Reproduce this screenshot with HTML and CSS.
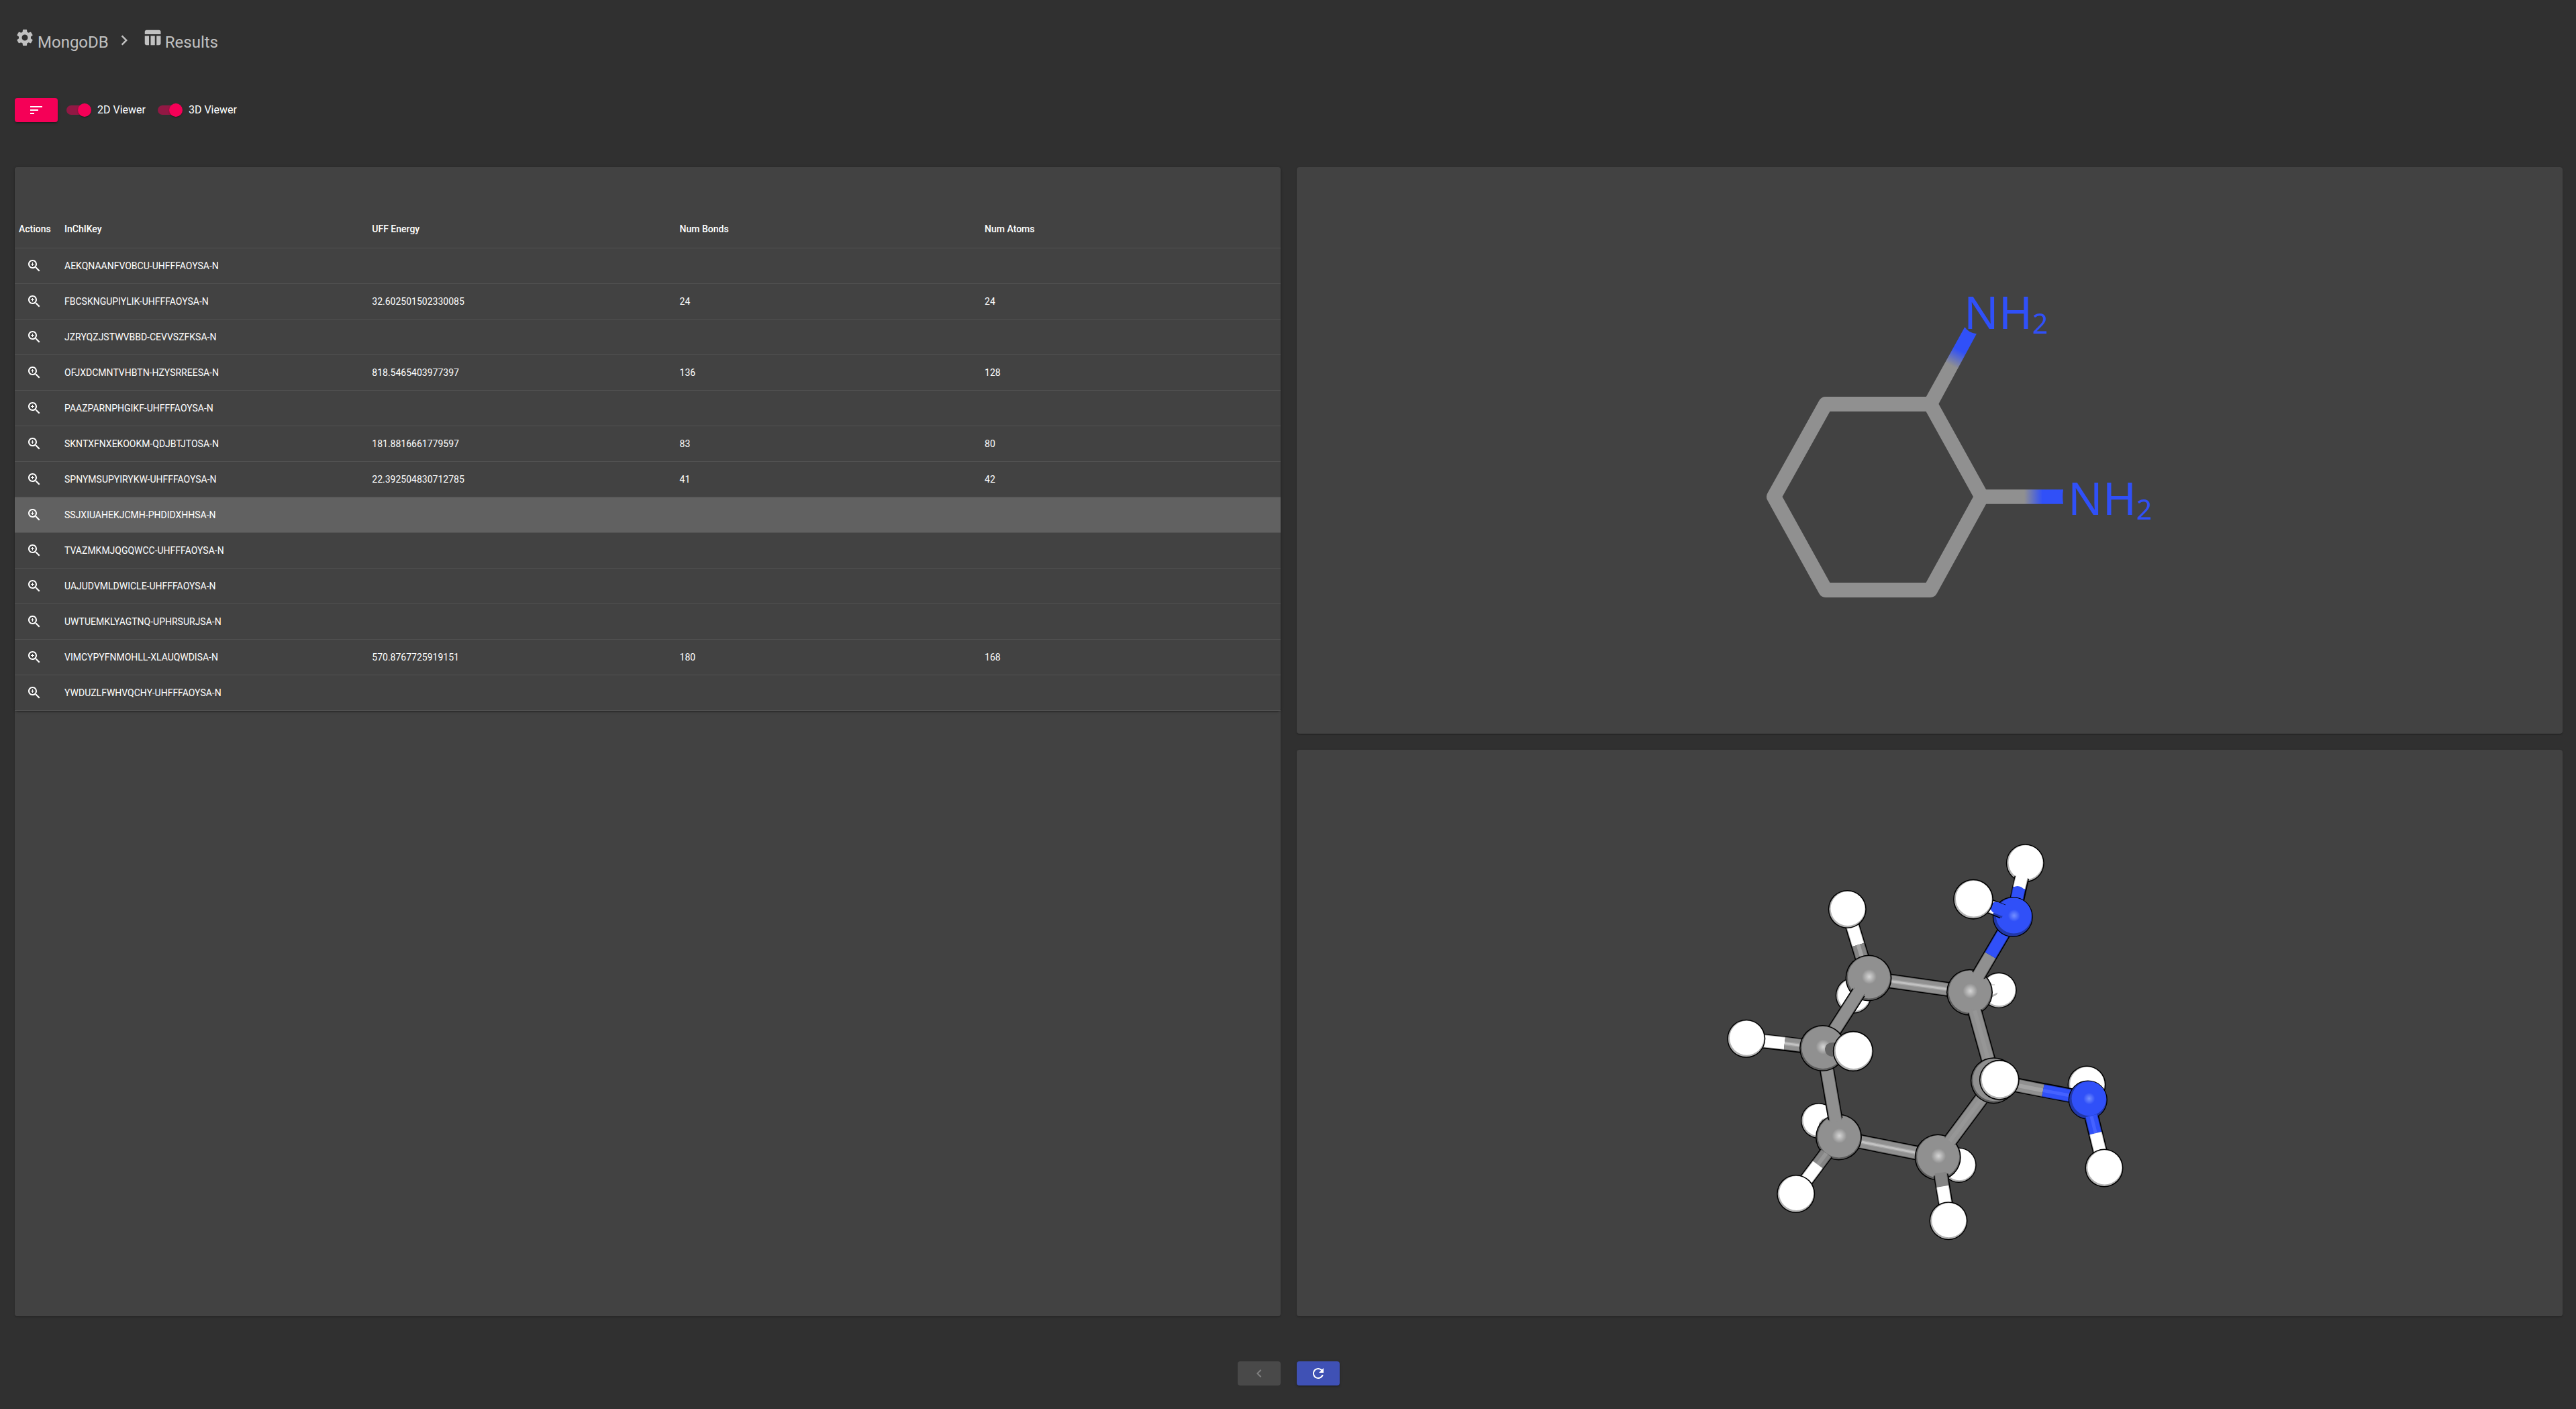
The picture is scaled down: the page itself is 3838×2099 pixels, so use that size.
FILE: index.html
```html
<!DOCTYPE html>
<html lang="en">
<head>
<meta charset="utf-8">
<title>MongoDB Results</title>
<link rel="stylesheet" href="styles.css">
</head>
<body>
<svg class="sprite" aria-hidden="true">
  <symbol id="i-zoom" viewBox="0 0 24 24"><path d="M15.5 14h-.79l-.28-.27C15.41 12.59 16 11.11 16 9.5 16 5.91 13.09 3 9.5 3S3 5.91 3 9.5 5.91 16 9.5 16c1.61 0 3.09-.59 4.23-1.57l.27.28v.79l5 4.99L20.49 19l-4.99-5zm-6 0C7.01 14 5 11.99 5 9.5S7.01 5 9.5 5 14 7.01 14 9.5 11.99 14 9.5 14zm2.5-4h-2v2H9v-2H7V9h2V7h1v2h2v1z"/></symbol>
</svg>
<div class="page">
  <nav class="crumbs" aria-label="Breadcrumb">
    <a class="crumb" href="#mongodb"><svg class="crumb-icon" viewBox="0 0 24 24" aria-hidden="true"><path d="M19.14,12.94c0.04-0.3,0.06-0.61,0.06-0.94c0-0.32-0.02-0.64-0.07-0.94l2.03-1.58c0.18-0.14,0.23-0.41,0.12-0.61 l-1.92-3.32c-0.12-0.22-0.37-0.29-0.59-0.22l-2.39,0.96c-0.5-0.38-1.03-0.7-1.62-0.94L14.4,2.81c-0.04-0.24-0.24-0.41-0.48-0.41 h-3.84c-0.24,0-0.43,0.17-0.47,0.41L9.25,5.35C8.66,5.59,8.12,5.92,7.63,6.29L5.24,5.33c-0.22-0.08-0.47,0-0.59,0.22L2.74,8.87 C2.62,9.08,2.66,9.34,2.86,9.48l2.03,1.58C4.84,11.36,4.8,11.69,4.8,12s0.02,0.64,0.07,0.94l-2.03,1.58 c-0.18,0.14-0.23,0.41-0.12,0.61l1.92,3.32c0.12,0.22,0.37,0.29,0.59,0.22l2.39-0.96c0.5,0.38,1.03,0.7,1.62,0.94l0.36,2.54 c0.05,0.24,0.24,0.41,0.48,0.41h3.84c0.24,0,0.44-0.17,0.47-0.41l0.36-2.54c0.59-0.24,1.13-0.56,1.62-0.94l2.39,0.96 c0.22,0.08,0.47,0,0.59-0.22l1.92-3.32c0.12-0.22,0.07-0.47-0.12-0.61L19.14,12.94z M12,15.6c-1.98,0-3.6-1.62-3.6-3.6 s1.62-3.6,3.6-3.6s3.6,1.62,3.6,3.6S13.98,15.6,12,15.6z"/></svg>MongoDB</a>
    <svg class="crumb-sep" viewBox="0 0 24 24" aria-hidden="true"><path d="M10 6L8.59 7.41 13.17 12l-4.58 4.59L10 18l6-6z"/></svg>
    <a class="crumb crumb-last" href="#results"><svg class="crumb-icon" viewBox="0 0 24 24" aria-hidden="true"><path d="M10 10.02h5V21h-5zM17 21h3c1.1 0 2-.9 2-2v-9h-5v11zm3-18H5c-1.1 0-2 .9-2 2v3h19V5c0-1.1-.9-2-2-2zM3 19c0 1.1.9 2 2 2h3V10H3v9z"/></svg>Results</a>
  </nav>

  <div class="toolbar">
    <button class="btn btn-accent" type="button" aria-label="Sort"><svg class="icon" viewBox="0 0 24 24" aria-hidden="true"><path d="M3 18h6v-2H3v2zM3 6v2h18V6H3zm0 7h12v-2H3v2z"/></svg></button>
    <div class="switches">
      <label class="switch"><input type="checkbox" checked>2D Viewer</label>
      <label class="switch"><input type="checkbox" checked>3D Viewer</label>
    </div>
  </div>

  <main class="panels">
    <section class="panel panel-table">
      <div class="table-card">
        <table class="results">
          <colgroup><col class="col-actions"><col class="col-key"><col class="col-energy"><col class="col-bonds"><col></colgroup>
          <thead>
            <tr><th class="actions" scope="col">Actions</th><th scope="col">InChIKey</th><th scope="col">UFF Energy</th><th scope="col">Num Bonds</th><th scope="col">Num Atoms</th></tr>
          </thead>
          <tbody>
            <tr><td class="actions"><button class="view" type="button" aria-label="View"><svg class="icon"><use href="#i-zoom"/></svg></button></td><td>AEKQNAANFVOBCU-UHFFFAOYSA-N</td><td></td><td></td><td></td></tr>
            <tr><td class="actions"><button class="view" type="button" aria-label="View"><svg class="icon"><use href="#i-zoom"/></svg></button></td><td>FBCSKNGUPIYLIK-UHFFFAOYSA-N</td><td>32.602501502330085</td><td>24</td><td>24</td></tr>
            <tr><td class="actions"><button class="view" type="button" aria-label="View"><svg class="icon"><use href="#i-zoom"/></svg></button></td><td>JZRYQZJSTWVBBD-CEVVSZFKSA-N</td><td></td><td></td><td></td></tr>
            <tr><td class="actions"><button class="view" type="button" aria-label="View"><svg class="icon"><use href="#i-zoom"/></svg></button></td><td>OFJXDCMNTVHBTN-HZYSRREESA-N</td><td>818.5465403977397</td><td>136</td><td>128</td></tr>
            <tr><td class="actions"><button class="view" type="button" aria-label="View"><svg class="icon"><use href="#i-zoom"/></svg></button></td><td>PAAZPARNPHGIKF-UHFFFAOYSA-N</td><td></td><td></td><td></td></tr>
            <tr><td class="actions"><button class="view" type="button" aria-label="View"><svg class="icon"><use href="#i-zoom"/></svg></button></td><td>SKNTXFNXEKOOKM-QDJBTJTOSA-N</td><td>181.8816661779597</td><td>83</td><td>80</td></tr>
            <tr><td class="actions"><button class="view" type="button" aria-label="View"><svg class="icon"><use href="#i-zoom"/></svg></button></td><td>SPNYMSUPYIRYKW-UHFFFAOYSA-N</td><td>22.392504830712785</td><td>41</td><td>42</td></tr>
            <tr class="selected"><td class="actions"><button class="view" type="button" aria-label="View"><svg class="icon"><use href="#i-zoom"/></svg></button></td><td>SSJXIUAHEKJCMH-PHDIDXHHSA-N</td><td></td><td></td><td></td></tr>
            <tr><td class="actions"><button class="view" type="button" aria-label="View"><svg class="icon"><use href="#i-zoom"/></svg></button></td><td>TVAZMKMJQGQWCC-UHFFFAOYSA-N</td><td></td><td></td><td></td></tr>
            <tr><td class="actions"><button class="view" type="button" aria-label="View"><svg class="icon"><use href="#i-zoom"/></svg></button></td><td>UAJUDVMLDWICLE-UHFFFAOYSA-N</td><td></td><td></td><td></td></tr>
            <tr><td class="actions"><button class="view" type="button" aria-label="View"><svg class="icon"><use href="#i-zoom"/></svg></button></td><td>UWTUEMKLYAGTNQ-UPHRSURJSA-N</td><td></td><td></td><td></td></tr>
            <tr><td class="actions"><button class="view" type="button" aria-label="View"><svg class="icon"><use href="#i-zoom"/></svg></button></td><td>VIMCYPYFNMOHLL-XLAUQWDISA-N</td><td>570.8767725919151</td><td>180</td><td>168</td></tr>
            <tr><td class="actions"><button class="view" type="button" aria-label="View"><svg class="icon"><use href="#i-zoom"/></svg></button></td><td>YWDUZLFWHVQCHY-UHFFFAOYSA-N</td><td></td><td></td><td></td></tr>
          </tbody>
        </table>
      </div>
    </section>

    <div class="viewers">
      <section class="panel viewer" aria-label="2D Viewer">
        <svg class="molecule" viewBox="0 0 1886 844">
          <defs>
            <linearGradient id="cn-up" gradientUnits="userSpaceOnUse" x1="976" y1="296" x2="988" y2="273"><stop offset="0" stop-color="#909090"/><stop offset="1" stop-color="#3050f8"/></linearGradient>
            <linearGradient id="cn-right" gradientUnits="userSpaceOnUse" x1="1084" y1="0" x2="1111" y2="0"><stop offset="0" stop-color="#909090"/><stop offset="1" stop-color="#3050f8"/></linearGradient>
          </defs>
          <path class="ring" d="M788 353H944L1020.5 491L944 630H788L711 491Z"/>
          <path fill="url(#cn-up)" d="M934.5 348L995.3 238.3Q1001 247 1012.9 248.3L953.5 358Z"/>
          <path fill="url(#cn-right)" d="M1019 480.300H1142Q1140.500 491 1142 501.700H1019Z"/>
          <text class="atom-label" x="994" y="241">NH</text><text class="atom-sub" x="1096" y="248">2</text>
          <text class="atom-label" x="1149" y="518">NH</text><text class="atom-sub" x="1251" y="525">2</text>
        </svg>
      </section>

      <section class="panel viewer" aria-label="3D Viewer">
        <svg class="molecule" viewBox="0 0 1886 844">
          <defs>
            <radialGradient id="shine-c"><stop offset="0" stop-color="#d6d6d6"/><stop offset=".4" stop-color="#bababa"/><stop offset="1" stop-color="#909090"/></radialGradient>
            <radialGradient id="shine-n"><stop offset="0" stop-color="#7490ff"/><stop offset="1" stop-color="#3050f8"/></radialGradient>
            <g id="carbon"><circle r="34.500"/><circle r="33" fill="#5e5e5e"/><circle cx=".5" cy="-1" r="31.500" fill="#909090"/><circle cx="1" cy="-2" r="11" fill="url(#shine-c)"/></g>
            <g id="nitrogen"><circle r="30"/><circle r="28.700" fill="#2238a8"/><circle cx="1.500" cy="-2" r="26.500" fill="#3050f8"/><circle cx="2" cy="-2" r="9" fill="url(#shine-n)"/></g>
            <g id="hydrogen"><circle r="28.500"/><circle r="27" fill="#b2b2b2"/><circle cx=".7" cy="-1" r="25.500" fill="#fff"/></g>
          </defs>

          <!-- hydrogens at the back -->
          <use href="#hydrogen" transform="translate(829.500 366) scale(.94)"/>
          <use href="#hydrogen" transform="translate(777.500 552.500) scale(.93)"/>
          <path d="M778 556l5-6 8-2v16l-13 10z" fill="#b2b2b2"/>
          <use href="#hydrogen" transform="translate(986.500 618.700) scale(.92)"/>
          <use href="#hydrogen" transform="translate(1046 358.300) scale(.94)"/>
          <path d="M1030 350h10M1034 367l10-5-2 3-8 4z" fill="#b2b2b2" stroke="#b2b2b2"/>
          <use href="#hydrogen" transform="translate(1177 499)"/>

          <!-- bonds behind both of their atoms -->
          <g class="bond"><path class="line" d="M852 340L1002.500 361.300"/><path class="edge" d="M852 340L1002.500 361.300"/><path class="c" d="M852 340L1002.500 361.300"/><path class="glow" d="M852 340L1002.500 361.300"/><path class="gleam" d="M852 340L1002.500 361.300"/></g>
          <g class="bond"><path class="line" d="M807.500 577.300L955 606.800"/><path class="edge" d="M807.500 577.300L955 606.800"/><path class="c" d="M807.500 577.300L955 606.800"/><path class="glow" d="M807.500 577.300L955 606.800"/><path class="gleam" d="M807.500 577.300L955 606.800"/></g>
          <g class="bond"><path class="line" d="M670 431L784 444.500"/><path class="edge-h" d="M670 431L727 437.300"/><path class="h" d="M670 431L727 437.300"/><path class="edge" d="M727 437.300L784 444.500"/><path class="c" d="M727 437.300L784 444.500"/><path class="glow" d="M727 437.300L784 444.500"/><path class="gleam" d="M727 437.300L784 444.500"/></g>
          <g class="bond"><path class="line" d="M1038 492.700L1178.800 520"/><path class="edge" d="M1038 492.700L1112 507.500"/><path class="c" d="M1038 492.700L1112 507.500"/><path class="glow" d="M1038 492.700L1112 507.500"/><path class="edge-n" d="M1112 507.500L1178.800 520"/><path class="n" d="M1112 507.500L1178.800 520"/><path class="glow-n" d="M1112 507.500L1178.800 520"/></g>
          <g class="bond"><path class="line" d="M820.300 237.500L850 335"/><path class="edge-h" d="M820.300 237.500L836.500 290.500"/><path class="h" d="M820.300 237.500L836.500 290.500"/><path class="edge" d="M836.500 290.500L850 335"/><path class="c-dim" d="M836.500 290.500L850 335"/><path class="glow" d="M836.500 290.500L850 335"/></g>

          <use href="#carbon" x="852" y="340"/>
          <use href="#carbon" x="807.500" y="577"/>
          <use href="#carbon" x="955.200" y="607"/>
          <use href="#carbon" x="1002.500" y="361.300"/>
          <use href="#nitrogen" transform="translate(1178.800 521.500) scale(.97)"/>
          <use href="#hydrogen" x="1085.300" y="168.800"/>
          <use href="#hydrogen" x="820.300" y="237.500"/>
          <use href="#hydrogen" x="669.800" y="430.300"/>

          <!-- bonds that rise out of their rear atom -->
          <g class="bond"><path class="line" d="M837.300 361.300L784 444.500"/><path class="edge" d="M838.500 359.300L784 444.500"/><path class="c" d="M839.500 357.500L784 444.500"/></g>
          <g class="bond"><path class="line" d="M802.500 550L785.500 451"/><path class="edge" d="M803 552L785.500 451"/><path class="c" d="M803.300 554L785.500 451"/></g>
          <g class="bond"><path class="line" d="M789 601L743.700 661.500"/><path class="edge" d="M789 601L776.300 618"/><path class="c-dim" d="M789 601L776.300 618"/><path class="glow-dim" d="M789 601L776.300 618"/><path class="edge-h" d="M776.300 618L743.700 661.500"/><path class="h" d="M776.300 618L743.700 661.500"/></g>
          <g class="bond"><path class="line" d="M973.700 582.300L1020 520"/><path class="edge" d="M972.700 583.700L1020 520"/><path class="c" d="M971 586L1020 520"/><path class="glow-dim" d="M973 583.300L1020 520"/></g>
          <g class="bond"><path class="line" d="M959.700 633L971 701.700"/><path class="edge" d="M959.500 632L962.300 650.300"/><path class="c-dim" d="M959.200 630L962.300 650.300"/><path class="edge-h" d="M962.300 650.300L971 701.700"/><path class="h" d="M962.300 650.300L971 701.700"/></g>
          <g class="bond"><path class="line" d="M1010.300 389.700L1031 464"/><path class="edge" d="M1010 388.500L1031 464"/><path class="c" d="M1009.300 386L1031 464"/><path class="glow-dim" d="M1010 388.500L1031 464"/></g>
          <g class="bond"><path class="line" d="M1015.800 336L1060 261"/><path class="edge" d="M1015.300 337L1033.500 306"/><path class="c" d="M1014 339L1033.500 306"/><path class="edge-n" d="M1033.500 306L1060 261"/><path class="n" d="M1033.500 306L1060 261"/></g>
          <g class="bond"><path class="line" d="M1080.300 190L1068.500 245"/><path class="edge-h" d="M1080.500 189L1076.300 206"/><path class="h" d="M1081 186L1076.300 206"/><path class="edge-n" d="M1076.300 206L1068.500 245"/><path class="n" d="M1076.300 206L1068.500 245"/></g>
          <path d="M1068 204.500Q1077 200 1085 209L1083 213L1067 209Z" fill="#3050f8"/>
          <g class="bond"><path class="line" d="M1184.500 548L1203 623"/><path class="edge-n" d="M1184.200 547L1190.300 571.300"/><path class="n" d="M1183.800 545L1190.300 571.300"/><path class="glow-n" d="M1184 546L1190.300 571.300"/><path class="edge-h" d="M1190.300 571.300L1203 623"/><path class="h" d="M1190.300 571.300L1203 623"/></g>

          <use href="#carbon" x="783.500" y="444.500"/>
          <use href="#carbon" x="1038.300" y="492.700"/>
          <use href="#nitrogen" x="1066.800" y="249"/>
          <use href="#hydrogen" x="743.700" y="661.500"/>
          <use href="#hydrogen" x="971" y="701.700"/>
          <use href="#hydrogen" x="1203" y="623"/>

          <!-- foreground -->
          <g class="bond"><path class="line" d="M1008 222.700L1052 241"/><path class="edge-h" d="M1008 222.700L1041 236.500"/><path class="h" d="M1008 222.700L1041 236.500"/><path class="edge-n" d="M1041 236.500L1054 242"/><path class="n" stroke-linecap="round" d="M1042 235L1052 239"/></g>
          <path d="M802 436q-14-1-15 9 0 13 15 12z" fill="#666"/>
          <use href="#hydrogen" transform="translate(829 449) scale(1.060)"/>
          <use href="#hydrogen" transform="translate(1046.800 491.800) scale(1.050)"/>
          <use href="#hydrogen" transform="translate(1008 222.700) scale(1.050)"/>
        </svg>
      </section>
    </div>
  </main>

  <footer class="pager">
    <button class="btn btn-prev" type="button" aria-label="Previous" disabled><svg class="icon" viewBox="0 0 24 24" aria-hidden="true"><path d="M15.410 7.410L14 6l-6 6 6 6 1.410-1.410L10.830 12z"/></svg></button>
    <button class="btn btn-primary" type="button" aria-label="Refresh"><svg class="icon" viewBox="0 0 24 24" aria-hidden="true"><path d="M17.650 6.350C16.200 4.900 14.210 4 12 4c-4.420 0-7.990 3.580-7.990 8s3.570 8 7.990 8c3.730 0 6.840-2.550 7.730-6h-2.080c-.82 2.330-3.040 4-5.650 4-3.310 0-6-2.690-6-6s2.690-6 6-6c1.660 0 3.140.69 4.220 1.780L13 11h7V4l-2.350 2.350z"/></svg></button>
  </footer>
</div>
</body>
</html>
```
FILE: styles.css
```css
* { box-sizing: border-box; }

body {
  margin: 0;
  background: #303030;
  color: #fff;
  font-family: Roboto, "Liberation Sans", sans-serif;
  font-size: 14px;
  line-height: 20px;
}

.sprite { display: none; }

.page {
  display: flex;
  flex-direction: column;
  gap: 67px;
  min-height: 100vh;
  padding: 41px 20px 35px 22px;
}

.icon {
  display: block;
  width: 24px;
  height: 24px;
  fill: currentColor;
}

/* breadcrumb */
.crumbs {
  display: flex;
  align-items: center;
  gap: 8px;
  height: 38px;
  color: #c1c1c1;
  font-size: 24px;
  line-height: 32px;
}

.crumb { color: inherit; text-decoration: none; }
.crumb-last { margin-left: 4px; }

.crumb-icon {
  width: 30px;
  height: 30px;
  margin-right: 4px;
  fill: currentColor;
}

.crumb-sep { width: 30px; height: 30px; fill: currentColor; }

/* buttons */
.btn {
  display: flex;
  align-items: center;
  justify-content: center;
  width: 64px;
  height: 36px;
  padding: 0;
  border: 0;
  border-radius: 4px;
  color: #fff;
  box-shadow: 0 3px 1px -2px rgba(0, 0, 0, .2), 0 2px 2px rgba(0, 0, 0, .14), 0 1px 5px rgba(0, 0, 0, .12);
}

.btn-accent { background: #f50057; }
.btn-primary { background: #3f51b5; }

.btn-prev {
  background: #494949;
  color: #7f7f7f;
  box-shadow: none;
}

/* toolbar */
.toolbar { display: flex; align-items: center; gap: 13px; }
.switches { display: flex; gap: 18px; }

.switch {
  display: flex;
  align-items: center;
  gap: 12px;
  font-size: 16px;
  line-height: 24px;
}

.switch input {
  appearance: none;
  position: relative;
  width: 34px;
  height: 14px;
  margin: 0;
  border-radius: 7px;
  background: #921844;
}

.switch input::before {
  content: "";
  position: absolute;
  top: -3px;
  left: 17px;
  width: 20px;
  height: 20px;
  border-radius: 50%;
  background: #f50057;
  box-shadow: 0 2px 1px -1px rgba(0, 0, 0, .2), 0 1px 1px rgba(0, 0, 0, .14), 0 1px 3px rgba(0, 0, 0, .12);
}

/* panels */
.panels {
  flex: 1;
  display: grid;
  grid-template-columns: 1fr 1fr;
  gap: 24px;
}

.viewers { display: grid; grid-template-rows: 1fr 1fr; gap: 24px; }

.panel, .table-card {
  border-radius: 4px;
  background: #424242;
  box-shadow: 0 2px 1px -1px rgba(0, 0, 0, .2), 0 1px 1px rgba(0, 0, 0, .14), 0 1px 3px rgba(0, 0, 0, .12);
}

.table-card {
  padding-top: 64px;
  box-shadow: 0 3px 1px -2px rgba(0, 0, 0, .2), 0 2px 2px rgba(0, 0, 0, .14), 0 1px 5px rgba(0, 0, 0, .12);
}

.viewer { display: flex; min-height: 0; }
.molecule { flex: 1; width: 100%; height: 100%; }

/* table */
.results {
  width: 100%;
  table-layout: fixed;
  border-collapse: separate;
  border-spacing: 0;
}

.col-actions { width: 58px; }
.col-key, .col-energy { width: 24.3%; }
.col-bonds { width: 24.1%; }

.results th, .results td {
  height: 53px;
  padding: 0 16px;
  border-bottom: 1px solid #515151;
  text-align: left;
  font-weight: 400;
}

.results th { height: 57px; font-weight: 500; }
.results th.actions { padding: 0 0 0 6px; }
.results td.actions { padding: 0 17px; }
.selected { background: #616161; }

.view {
  display: block;
  padding: 0;
  border: 0;
  background: none;
  color: #fff;
}

/* 2D structure */
.ring {
  fill: none;
  stroke: #909090;
  stroke-width: 22;
  stroke-linejoin: round;
}

.atom-label, .atom-sub {
  fill: #3050f8;
  font-family: "Noto Sans", "Open Sans", sans-serif;
  font-size: 68px;
}

.atom-sub { font-size: 41px; }

/* 3D structure */
.bond { fill: none; }
.line { stroke: #000; stroke-width: 22; }
.edge, .edge-n, .edge-h { stroke-width: 19; }
.edge { stroke: #666; }
.edge-n { stroke: #2238a8; }
.edge-h { stroke: #b2b2b2; }
.c, .c-dim, .n, .h { stroke-width: 17; }
.c { stroke: #909090; }
.c-dim { stroke: #858585; }
.n { stroke: #3050f8; }
.h { stroke: #fff; }
.glow { stroke: #a4a4a4; stroke-width: 6; }
.glow-dim { stroke: #969696; stroke-width: 6; }
.glow-n { stroke: #4562ff; stroke-width: 5; }
.gleam { stroke: #c2c2c2; stroke-width: 3; }

/* footer */
.pager { display: grid; grid-template-columns: 1fr 1fr; gap: 24px; }
.btn-prev { justify-self: end; }
```
